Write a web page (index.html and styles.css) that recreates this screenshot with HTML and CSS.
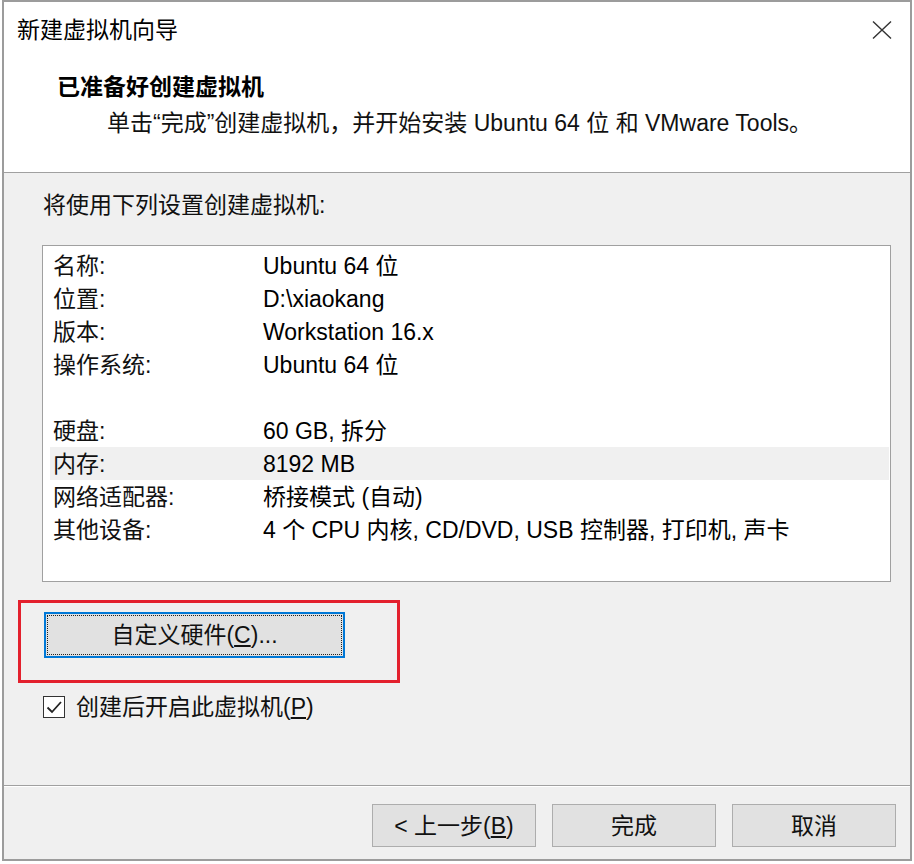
FILE: index.html
```html
<!DOCTYPE html>
<html lang="zh-CN">
<head>
<meta charset="utf-8">
<title>新建虚拟机向导</title>
<link rel="stylesheet" href="styles.css">
</head>
<body>
<div class="window">
  <div class="header">
    <div class="titlebar">
      <span class="title">新建虚拟机向导</span>
      <svg class="close" width="20" height="18" viewBox="0 0 20 18"><path d="M1 0.5 L19 17.5 M19 0.5 L1 17.5" stroke="#333" stroke-width="1.4" fill="none"/></svg>
    </div>
    <div class="heading">已准备好创建虚拟机</div>
    <div class="subtitle">单击“完成”创建虚拟机，并开始安装 Ubuntu 64 位 和 VMware Tools。</div>
  </div>
  <div class="content">
    <div class="intro">将使用下列设置创建虚拟机:</div>
    <div class="summary">
      <div class="row"><span class="key">名称:</span><span class="val">Ubuntu 64 位</span></div>
      <div class="row"><span class="key">位置:</span><span class="val">D:\xiaokang</span></div>
      <div class="row"><span class="key">版本:</span><span class="val">Workstation 16.x</span></div>
      <div class="row"><span class="key">操作系统:</span><span class="val">Ubuntu 64 位</span></div>
      <div class="row"></div>
      <div class="row"><span class="key">硬盘:</span><span class="val">60 GB, 拆分</span></div>
      <div class="row selected"><span class="key">内存:</span><span class="val">8192 MB</span></div>
      <div class="row"><span class="key">网络适配器:</span><span class="val">桥接模式 (自动)</span></div>
      <div class="row"><span class="key">其他设备:</span><span class="val">4 个 CPU 内核, CD/DVD, USB 控制器, 打印机, 声卡</span></div>
    </div>
    <div class="mark">
      <button class="btn btn-focus">自定义硬件(<u>C</u>)...</button>
    </div>
    <label class="check">
      <span class="box"><svg width="20" height="20" viewBox="0 0 20 20"><path d="M3.5 10.5 L8 15 L17 5" stroke="#222" stroke-width="1.8" fill="none"/></svg></span>
      <span>创建后开启此虚拟机(<u>P</u>)</span>
    </label>
  </div>
  <div class="footer">
    <button class="btn btn-foot">&lt; 上一步(<u>B</u>)</button>
    <button class="btn btn-foot">完成</button>
    <button class="btn btn-foot">取消</button>
  </div>
</div>
</body>
</html>
```
FILE: styles.css
```css
* { box-sizing: border-box; }
html, body { margin: 0; padding: 0; background: #ffffff; }
body {
  font-family: "Liberation Sans", "Noto Sans CJK SC", sans-serif;
  font-size: 23px;
  line-height: 30px;
  color: #111;
}
.window {
  margin-left: 2px;
  width: 910px;
  height: 861px;
  border: 2px solid #9c9c9c;
  display: flex;
  flex-direction: column;
  background: #f0f0f0;
}
.header {
  height: 171px;
  background: #fff;
  border-bottom: 1px solid #a0a0a0;
  flex: none;
}
.titlebar {
  margin-top: 13px;
  height: 30px;
  padding-left: 13px;
  padding-right: 18px;
  display: flex;
  align-items: center;
  justify-content: space-between;
}
.title { color: #000; }
.close { display: block; }
.heading {
  margin-top: 27px;
  padding-left: 53px;
  font-size: 23px;
  font-weight: bold;
  color: #000;
}
.subtitle {
  margin-top: 6px;
  padding-left: 103px;
  color: #111;
}
.content {
  flex: 1;
  padding-top: 17px;
  padding-left: 14px;
}
.intro {
  margin-left: 25px;
}
.summary {
  margin-top: 25px;
  margin-left: 24px;
  width: 849px;
  height: 337px;
  background: #fff;
  border: 1px solid #a0a0a0;
  padding: 3px 1px 0 7px;
}
.row {
  height: 33px;
  display: flex;
  align-items: center;
  padding-left: 3px;
}
.row.selected { background: #f0f0f0; }
.key { width: 210px; flex: none; }
.val { color: #000; }
.mark {
  margin-top: 18px;
  width: 382px;
  height: 83px;
  border: 3px solid #e3202d;
  padding: 9px 0 0 23px;
}
.btn {
  font-family: inherit;
  font-size: 23px;
  line-height: 30px;
  color: #111;
  background: #e1e1e1;
  border: 1px solid #adadad;
  padding: 0;
  margin: 0;
  display: flex;
  align-items: center;
  justify-content: center;
}
.btn-focus {
  width: 301px;
  height: 46px;
  border: 2px solid #0078d7;
  outline: 1px dotted #222;
  outline-offset: -4px;
}
.check {
  margin-top: 13px;
  margin-left: 25px;
  height: 22px;
  display: flex;
  align-items: center;
  gap: 11px;
}
.box {
  width: 22px;
  height: 22px;
  flex: none;
  border: 1px solid #333;
  background: #fff;
  display: flex;
  align-items: center;
  justify-content: center;
}
.box svg { display: block; }
.footer {
  height: 74px;
  flex: none;
  border-top: 1px solid #a0a0a0;
  box-shadow: inset 0 1px 0 #fff;
  padding-top: 18px;
  padding-right: 14px;
  display: flex;
  justify-content: flex-end;
  align-items: flex-start;
  gap: 16px;
}
.btn-foot {
  width: 164px;
  height: 43px;
}
```
